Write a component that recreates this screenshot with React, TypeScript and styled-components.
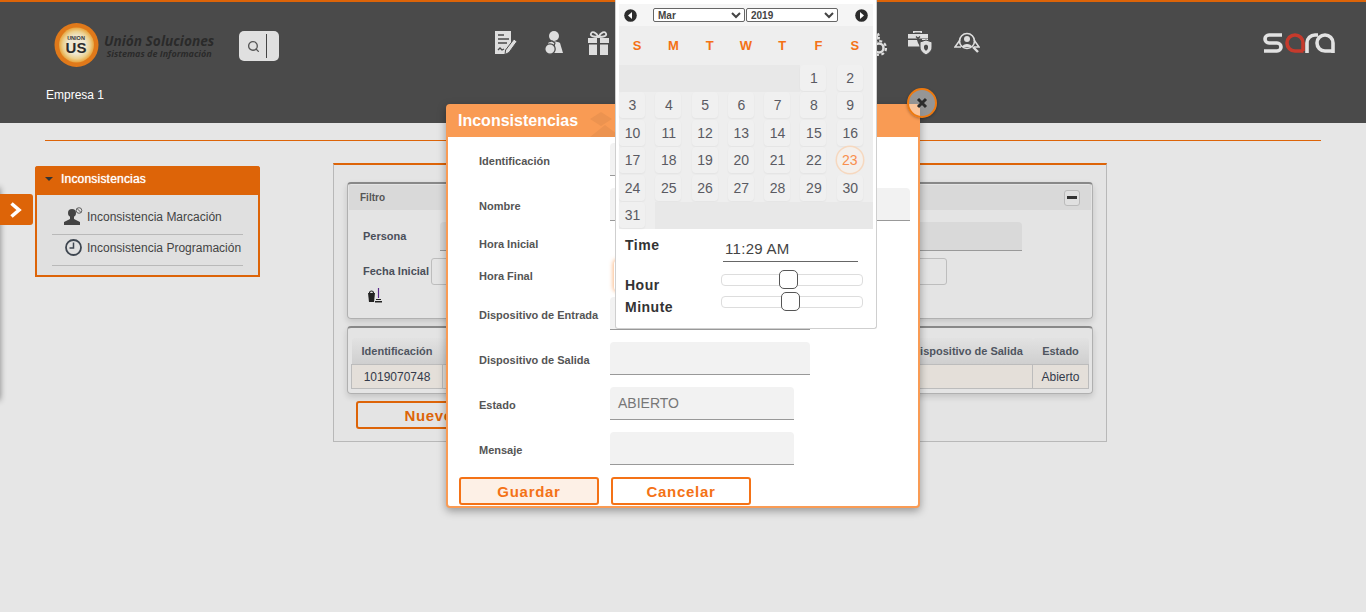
import React from "react";
import styled, { createGlobalStyle } from "styled-components";
import { Search } from "lucide-react";

const Global = createGlobalStyle`
  html, body { margin: 0; padding: 0; height: 100%; overflow: hidden; background: #e6e6e6; }
  body { font-family: "Liberation Sans", Arial, sans-serif; }
  #root { height: 612px; position: relative; overflow: hidden; }
`;

const orange = "#dd6408";

const Header = styled.header`
  height: 121px;
  border-top: 2px solid ${orange};
  background: #4a4a4a;
  display: flex;
  flex-direction: column;
`;
const TopRow = styled.div`
  display: flex;
  align-items: flex-start;
  height: 65px;
  padding: 21px 31px 0 54px;
`;
const Brand = styled.div`
  width: 185px;
  display: flex;
  gap: 5px;
  align-items: center;
  height: 44px;
`;
const BrandText = styled.div`
  display: flex;
  flex-direction: column;
  align-items: center;
  color: #2a2a2a;
  font-family: "Open Sans", sans-serif;
  font-style: italic;
  font-weight: 700;
  padding-top: 2px;
  white-space: nowrap;
`;
const BrandName = styled.span`
  font-size: 13.7px;
  line-height: 14px;
`;
const BrandSub = styled.span`
  font-size: 9px;
  line-height: 10px;
  margin-top: 1px;
`;
const SearchBox = styled.div`
  width: 40px;
  height: 30px;
  margin-top: 8px;
  border-radius: 5px;
  background: #e0e0e0;
  display: flex;
  align-items: center;
  padding-left: 8px;
  box-sizing: border-box;
  color: #555;
`;
const SearchBar = styled.span`
  width: 1px;
  height: 24px;
  background: #444;
  margin-left: 6px;
`;
const IconBar = styled.nav`
  margin-left: 204px;
  display: grid;
  grid-template-columns: repeat(9, 46.4px) 39px 55px;
  align-items: center;
  justify-items: center;
  height: 40px;
  color: #dedede;
`;
const Sora = styled.div`
  margin-left: auto;
  margin-top: 10px;
  width: 72px;
  height: 20px;
`;
const Empresa = styled.div`
  padding-left: 46px;
  color: #fff;
  font-size: 12px;
  line-height: 14px;
`;
const Rule = styled.hr`
  border: 0;
  height: 1px;
  background: ${orange};
  margin: 17px 45px 0;
`;
const Content = styled.main`
  display: flex;
  align-items: flex-start;
  padding: 22px 0 0 35px;
`;
const Sidebar = styled.aside`
  width: 225px;
  margin-top: 3px;
  box-sizing: border-box;
  border: 2px solid ${orange};
  border-top: 0;
  border-radius: 3px 3px 0 0;
  background: #e0e0e0;
`;
const SideHead = styled.div`
  height: 26px;
  padding: 0 0 3px 10px;
  margin: 0 -2px;
  background: ${orange};
  border-radius: 3px 3px 0 0;
  display: flex;
  align-items: center;
  gap: 8px;
  color: #fff;
  font-size: 12px;
  letter-spacing: 0.2px;
  text-shadow: 0 0 1px #fff;
`;
const Caret = styled.span`
  width: 0;
  height: 0;
  border-left: 4px solid transparent;
  border-right: 4px solid transparent;
  border-top: 4px solid #333;
`;
const SideList = styled.div`
  padding: 9px 15px 9px;
`;
const SideItem = styled.div`
  height: 25px;
  border-bottom: 1px solid #b9b9b9;
  display: flex;
  align-items: center;
  gap: 4px;
  padding: 0 0 5px 12px;
  font-size: 12px;
  color: #444;
  white-space: nowrap;
`;
const Panel = styled.section`
  width: 774px;
  height: 279px;
  margin-left: 73px;
  box-sizing: border-box;
  border: 1px solid #b8b8b8;
  border-top: 2px solid ${orange};
  background: #e4e4e4;
  padding: 17px 13px 0;
`;
const Card = styled.div<{ $h: number }>`
  height: ${(p) => p.$h}px;
  box-sizing: border-box;
  border: 1px solid #b0b0b0;
  border-top: 2px solid #888;
  border-radius: 4px;
  box-shadow: 0 3px 6px rgba(0, 0, 0, 0.14);
  margin-bottom: 7px;
  padding: 1px;
`;
const CardHead = styled.div`
  height: 25px;
  background: #d9d9d9;
  display: flex;
  align-items: center;
  justify-content: space-between;
  padding: 0 11px;
  font-size: 10px;
  font-weight: 700;
  color: #555;
`;
const Collapse = styled.span`
  width: 16px;
  height: 16px;
  box-sizing: border-box;
  border: 1px solid #bbb;
  border-radius: 3px;
  background: #e0e0e0;
  display: flex;
  align-items: center;
  justify-content: center;
  &::before {
    content: "";
    width: 10px;
    height: 3px;
    background: #333;
  }
`;
const FilterRow = styled.div<{ $t: number }>`
  display: flex;
  align-items: center;
  margin-top: ${(p) => p.$t}px;
  padding-left: 14px;
  font-size: 11px;
  font-weight: 700;
  color: #4a4f5a;
  white-space: nowrap;
`;
const FilterLabel = styled.span`
  padding-bottom: 2px;
`;
const PersonaInput = styled.div`
  width: 582px;
  height: 29px;
  box-sizing: border-box;
  margin-left: 34px;
  background: #d9d9d9;
  border-bottom: 1px solid #999;
  border-radius: 4px 4px 0 0;
`;
const DateInput = styled.div`
  width: 516px;
  height: 27px;
  box-sizing: border-box;
  margin-left: 2px;
  border: 1px solid #bdbdbd;
  border-radius: 3px;
`;
const Broom = styled.div`
  height: 16px;
  margin: 3px 0 0 18px;
`;
const Table = styled.table`
  width: 737px;
  table-layout: fixed;
  border-collapse: collapse;
  margin: 9px 0 0 2px;
`;
const Th = styled.th`
  height: 26px;
  padding: 0;
  font-size: 11px;
  font-weight: 700;
  color: #4f5560;
  background: linear-gradient(#e2e2e2, #cfcfcf);
  border-radius: 3px 3px 0 0;
  white-space: nowrap;
`;
const Td = styled.td`
  height: 23px;
  padding: 0;
  text-align: center;
  font-size: 12px;
  color: #333a4a;
  background: #e4dfd9;
  border: 1px solid #bcbcbc;
`;
const NewButton = styled.button`
  display: block;
  width: 146px;
  height: 28px;
  margin-left: 9px;
  border: 2px solid ${orange};
  border-radius: 3px;
  background: transparent;
  color: ${orange};
  font: 700 15px "Liberation Sans", Arial, sans-serif;
  letter-spacing: 0.6px;
`;
const SideTab = styled.div`
  position: absolute;
  left: 0;
  top: 194px;
  width: 33px;
  height: 31px;
  background: ${orange};
  border-radius: 0 3px 3px 0;
  display: flex;
  align-items: center;
  padding-left: 9px;
  box-sizing: border-box;
`;
const EdgeShade = styled.div`
  position: absolute;
  left: -8px;
  top: 188px;
  width: 8px;
  height: 212px;
  box-shadow: 0 0 6px rgba(0, 0, 0, 0.45);
`;
const Modal = styled.div`
  position: absolute;
  left: 446px;
  top: 104px;
  width: 474px;
  height: 404px;
  box-sizing: border-box;
  border: 2px solid #f99b54;
  border-radius: 4px;
  background: #fff;
  box-shadow: 0 3px 9px rgba(0, 0, 0, 0.35);
`;
const ModalHead = styled.div`
  height: 29px;
  padding: 0 0 2px 10px;
  background: #f99b54;
  display: flex;
  align-items: center;
  color: #fff;
  font-size: 16px;
  font-weight: 700;
  overflow: hidden;
`;
const Diamonds = styled.svg`
  margin: 0 0 -2px 11px;
  flex: none;
`;
const Form = styled.div`
  padding-top: 6px;
`;
const FormRow = styled.div<{ $h?: number; $mb?: number }>`
  display: flex;
  align-items: center;
  height: ${(p) => p.$h ?? 33}px;
  margin-bottom: ${(p) => p.$mb ?? 12}px;
  padding-left: 31px;
`;
const Label = styled.label`
  width: 131px;
  flex: none;
  padding-top: 2px;
  font-size: 11px;
  font-weight: 700;
  color: #555;
  white-space: nowrap;
`;
const Field = styled.div<{ $w: number }>`
  width: ${(p) => p.$w}px;
  height: 33px;
  box-sizing: border-box;
  background: #f2f2f2;
  border-bottom: 1px solid #999;
  border-radius: 4px 4px 0 0;
  padding: 0 8px;
  display: flex;
  align-items: center;
  font-size: 14px;
  color: #777;
`;
const FocusField = styled.div`
  width: 180px;
  height: 31px;
  margin-left: 4px;
  border-radius: 4px;
  box-shadow: 0 0 4px 1px rgba(249, 155, 84, 0.7);
`;
const Actions = styled.div`
  display: flex;
  gap: 12px;
  padding-left: 11px;
`;
const ModalButton = styled.button<{ $on?: boolean }>`
  width: 140px;
  height: 28px;
  border: 2px solid #f47216;
  border-radius: 3px;
  background: ${(p) => (p.$on ? "#fdf0e6" : "#fff")};
  color: #f47216;
  font: 700 15px "Liberation Sans", Arial, sans-serif;
  letter-spacing: 0.7px;
`;
const CloseBtn = styled.div`
  position: absolute;
  left: 907px;
  top: 88px;
  width: 30px;
  height: 30px;
  box-sizing: border-box;
  border: 2px solid #ee7a10;
  border-radius: 50%;
  background: rgba(255, 255, 255, 0.42);
  box-shadow: 0 1px 3px rgba(0, 0, 0, 0.3);
  display: flex;
  align-items: center;
  justify-content: center;
`;
const Calendar = styled.div`
  position: absolute;
  left: 615px;
  top: 0;
  width: 262px;
  height: 329px;
  box-sizing: border-box;
  background: #fff;
  border: 1px solid #cfcfcf;
  border-top: 0;
  border-radius: 0 0 3px 3px;
  padding: 4px 3px 0;
`;
const CalTitle = styled.div`
  height: 22px;
  background: #f5f5f5;
  display: flex;
  align-items: center;
  padding: 0 5px;
`;
const NavBtn = styled.svg`
  flex: none;
`;
const Selects = styled.div`
  display: flex;
  margin: -1px auto 0 16px;
  gap: 1px;
`;
const Select = styled.select`
  width: 92px;
  height: 14px;
  padding: 0;
  border: 1px solid #666;
  border-radius: 2px;
  background-color: #fff;
  font: 700 10px "Liberation Sans", Arial, sans-serif;
  color: #444;
`;
const Weekdays = styled.div`
  display: grid;
  grid-template-columns: repeat(7, 1fr);
  height: 39px;
  align-items: center;
  background: #eee;
  text-align: center;
  font-size: 13px;
  font-weight: 700;
  color: #f47216;
`;
const Days = styled.div`
  display: grid;
  grid-template-columns: repeat(7, 36.29px);
  grid-auto-rows: 27.4px;
  background: #eee;
  height: 164px;
`;
const Blank = styled.div<{ $span: number }>`
  grid-column: span ${(p) => p.$span};
  background: #e8e8e8;
`;
const Day = styled.div<{ $today?: boolean }>`
  width: 26px;
  height: 26px;
  padding-left: 1px;
  box-sizing: border-box;
  border-radius: 4px;
  background: #f0f0f0;
  box-shadow: 0 1px 2px rgba(0, 0, 0, 0.05);
  display: flex;
  align-items: center;
  justify-content: center;
  font-size: 14px;
  color: #5a5a62;
  ${(p) =>
    p.$today
      ? `padding-left: 0; border-radius: 50%; color: #f98f4e; box-shadow: 0 0 0 1.5px #f6d8bf; background: #f4f0ec;`
      : ""}
`;
const TimeGrid = styled.div`
  display: grid;
  grid-template-columns: 98px 142px;
  grid-template-rows: 33px 22px 22px;
  padding: 7px 0 0 6px;
  color: #333;
  font-size: 14px;
  font-weight: 700;
`;
const TimeLabel = styled.div<{ $row: number; $pad?: number }>`
  grid-row: ${(p) => p.$row};
  grid-column: 1;
  padding-top: ${(p) => p.$pad ?? 0}px;
  letter-spacing: 0.5px;
`;
const TimeValue = styled.div`
  grid-row: 1;
  grid-column: 2;
  width: 135px;
  height: 26px;
  box-sizing: border-box;
  border-bottom: 1px solid #666;
  padding: 4px 0 0 2px;
  font-size: 15px;
  font-weight: 400;
  letter-spacing: 0.3px;
  color: #444;
`;
const SliderCell = styled.div<{ $row: number }>`
  grid-row: ${(p) => p.$row};
  grid-column: 2;
  display: flex;
  align-items: center;
  margin-left: -2px;
`;
const Track = styled.div`
  position: relative;
  width: 142px;
  height: 12px;
  box-sizing: border-box;
  border: 1px solid #ddd;
  border-radius: 4px;
  background: #fff;
`;
const Handle = styled.div`
  position: absolute;
  top: -5px;
  width: 19px;
  height: 19px;
  box-sizing: border-box;
  border: 1px solid #555;
  border-radius: 5px;
  background: #fff;
`;

const Logo = () => (
  <svg width="45" height="44" viewBox="0 0 45 44">
    <defs>
      <radialGradient id="lg">
        <stop offset="50%" stopColor="#efe8d2" />
        <stop offset="78%" stopColor="#ecd08e" />
        <stop offset="100%" stopColor="#e8a53e" />
      </radialGradient>
    </defs>
    <circle cx="22.5" cy="22" r="22" fill="#e0791a" />
    <circle cx="22.5" cy="22" r="17.5" fill="url(#lg)" />
    <text x="22" y="17" textAnchor="middle" fontSize="5.5" fontWeight="700" fontFamily="Liberation Sans" fill="#333">
      UNION
    </text>
    <text x="22" y="30" textAnchor="middle" fontSize="15" fontWeight="700" fontFamily="Liberation Sans" fill="#2c2c2c">
      US
    </text>
  </svg>
);

const DocIcon = () => (
  <svg width="24" height="26" viewBox="0 0 24 26">
    <path d="M1 1h16v14l-5 9H1z" fill="currentColor" />
    <path d="M4 5h6M4 9h11M4 13h9M4 20l2-2 2 2 2-1" stroke="#4a4a4a" strokeWidth="1.3" fill="none" />
    <path d="M20 9l3 2.5-8 11-4 2 .6-4.5z" fill="currentColor" stroke="#4a4a4a" strokeWidth="1" />
  </svg>
);
const PersonIcon = () => (
  <svg width="20" height="26" viewBox="0 0 20 26">
    <circle cx="11" cy="6" r="5" fill="currentColor" />
    <path d="M5 13c3-2 9-2 12 0l3 10H9z" fill="currentColor" />
    <circle cx="7" cy="19" r="5.2" fill="currentColor" stroke="#4a4a4a" strokeWidth="1.3" />
    <path d="M9 11l3 2-1 3" stroke="#4a4a4a" strokeWidth="1.2" fill="none" />
  </svg>
);
const GiftIcon = () => (
  <svg width="23" height="25" viewBox="0 0 23 25">
    <path d="M1 7h9v5H1zM13 7h9v5h-9zM2 13.5h8V24H2zM13 13.5h8V24h-8z" fill="currentColor" />
    <path d="M11.5 6C9 1 5 0 4 2.5S6 6 11.5 6zM11.5 6c2.5-5 6.5-6 7.5-3.500S17 6 11.5 6z" fill="none" stroke="currentColor" strokeWidth="1.8" />
  </svg>
);
const GearIcon = () => (
  <svg width="22" height="26" viewBox="0 0 22 26">
    <circle cx="7" cy="7" r="4" fill="none" stroke="currentColor" strokeWidth="2.5" />
    <circle cx="7" cy="7" r="6" fill="none" stroke="currentColor" strokeWidth="2" strokeDasharray="2.5 2.2" />
    <circle cx="13" cy="18" r="4.5" fill="none" stroke="currentColor" strokeWidth="2.5" />
    <circle cx="13" cy="18" r="7" fill="none" stroke="currentColor" strokeWidth="2.2" strokeDasharray="3 2.5" />
  </svg>
);
const CaseIcon = () => (
  <svg width="26" height="26" viewBox="0 0 26 26">
    <path d="M6 3V1h9v2h-1.5V2.5h-6V3z" fill="currentColor" />
    <path d="M1 4h20v4.5H1zM1 10h9l1 3 2 3.5H1zM15 9h6v1h-6z" fill="currentColor" />
    <path d="M9 6.5l2 2 2-2" stroke="#4a4a4a" strokeWidth="1.3" fill="none" />
    <path d="M19 10l6 2v5c0 4-3 6-6 8-3-2-6-4-6-8v-5z" fill="currentColor" stroke="#4a4a4a" strokeWidth="1" />
    <path d="M19 14.5l2 1.2v2c0 1.4-1 2.3-2 3-1-.7-2-1.6-2-3v-2z" fill="#4a4a4a" />
  </svg>
);
const AuditIcon = () => (
  <svg width="26" height="22" viewBox="0 0 26 22">
    <circle cx="13" cy="9" r="7.5" fill="none" stroke="currentColor" strokeWidth="1.6" />
    <circle cx="13" cy="7" r="3" fill="currentColor" />
    <path d="M8 15c1-4 9-4 10 0" fill="currentColor" />
    <path d="M6 8L1 15h6M20 8l5 7h-5" fill="none" stroke="currentColor" strokeWidth="1.5" />
    <path d="M19 15l5 5" stroke="currentColor" strokeWidth="2.4" />
  </svg>
);
const SoraLogo = () => (
  <svg width="72" height="20" viewBox="0 0 72 20">
    <path d="M19 2H6a4 4 0 0 0 0 8h8a4 4 0 0 1 0 8H1" fill="none" stroke="#e2e2e2" strokeWidth="3.6" />
    <path d="M40.5 18H32a8 8 0 1 1 8-8v8" fill="none" stroke="#c63a2c" strokeWidth="3.6" />
    <path d="M44 20V10a8 8 0 0 1 8-8h3" fill="none" stroke="#e2e2e2" strokeWidth="3.6" />
    <path d="M70 18h-8a8 8 0 1 1 8-8v10" fill="none" stroke="#e2e2e2" strokeWidth="3.6" />
  </svg>
);
const UserBlock = () => (
  <svg width="19" height="19" viewBox="0 0 19 19">
    <circle cx="8" cy="6" r="4" fill="#444" />
    <path d="M6 9h4v3l6 3v3H0v-3l6-3z" fill="#444" />
    <circle cx="15" cy="3.5" r="2.8" fill="none" stroke="#444" strokeWidth="0.8" />
    <path d="M13 1.5l4 4" stroke="#444" strokeWidth="0.8" />
  </svg>
);
const ClockIcon = () => (
  <svg width="19" height="19" viewBox="0 0 19 19">
    <circle cx="9.5" cy="9.5" r="7.5" fill="none" stroke="#3e4650" strokeWidth="1.8" />
    <path d="M9.5 4.5v5.5H5.5" fill="none" stroke="#3e4650" strokeWidth="1.5" />
  </svg>
);
const BroomIcon = () => (
  <svg width="16" height="15" viewBox="0 0 16 15">
    <path d="M1 5h7l-1 9H2z" fill="#222" />
    <path d="M2.5 5a2 2 0 0 1 4 0" fill="none" stroke="#222" strokeWidth="1.2" />
    <path d="M11.5 0v10" stroke="#5a2a8a" strokeWidth="1.2" />
    <path d="M9 11h5v1H9zM8 13h7v1.5H8z" fill="#222" />
  </svg>
);

const Prev = ({ flip }: { flip?: boolean }) => (
  <NavBtn width="13" height="13" viewBox="0 0 13 13" style={flip ? { transform: "scaleX(-1)" } : undefined}>
    <circle cx="6.5" cy="6.5" r="6.3" fill="#2c2c2c" />
    <path d="M8 3L4 6.5 8 10z" fill="#fff" />
  </NavBtn>
);

const weekdays = ["S", "M", "T", "W", "T", "F", "S"];
const days = Array.from({ length: 31 }, (_, i) => i + 1);
const heads = ["Identificación", "", "", "", "", "Dispositivo de Salida", "Estado"];
const colWidths = [91, 126, 110, 110, 114, 130, 56];

export default function App() {
  return (
    <>
      <Global />
      <Header>
        <TopRow>
          <Brand>
            <Logo />
            <BrandText>
              <BrandName>Unión Soluciones</BrandName>
              <BrandSub>Sistemas de Información</BrandSub>
            </BrandText>
          </Brand>
          <SearchBox>
            <Search size={13} strokeWidth={2.5} />
            <SearchBar />
          </SearchBox>
          <IconBar>
            <DocIcon />
            <PersonIcon />
            <GiftIcon />
            <DocIcon />
            <PersonIcon />
            <DocIcon />
            <PersonIcon />
            <DocIcon />
            <GearIcon />
            <CaseIcon />
            <AuditIcon />
          </IconBar>
          <Sora>
            <SoraLogo />
          </Sora>
        </TopRow>
        <Empresa>Empresa 1</Empresa>
      </Header>
      <Rule />
      <Content>
        <Sidebar>
          <SideHead>
            <Caret />
            Inconsistencias
          </SideHead>
          <SideList>
            <SideItem>
              <UserBlock />
              Inconsistencia Marcación
            </SideItem>
            <SideItem>
              <ClockIcon />
              Inconsistencia Programación
            </SideItem>
          </SideList>
        </Sidebar>
        <Panel>
          <Card $h={137}>
            <CardHead>
              Filtro
              <Collapse />
            </CardHead>
            <FilterRow $t={12}>
              <FilterLabel>Persona</FilterLabel>
              <PersonaInput />
            </FilterRow>
            <FilterRow $t={7}>
              <FilterLabel>Fecha Inicial</FilterLabel>
              <DateInput />
            </FilterRow>
            <Broom>
              <BroomIcon />
            </Broom>
          </Card>
          <Card $h={68}>
            <Table>
              <colgroup>
                {colWidths.map((w, i) => (
                  <col key={i} style={{ width: w }} />
                ))}
              </colgroup>
              <thead>
                <tr>
                  {heads.map((h, i) => (
                    <Th key={i}>{h}</Th>
                  ))}
                </tr>
              </thead>
              <tbody>
                <tr>
                  <Td>1019070748</Td>
                  <Td />
                  <Td />
                  <Td />
                  <Td />
                  <Td />
                  <Td>Abierto</Td>
                </tr>
              </tbody>
            </Table>
          </Card>
          <NewButton>Nuevo</NewButton>
        </Panel>
      </Content>

      <EdgeShade />
      <SideTab>
        <svg width="14" height="16" viewBox="0 0 14 16">
          <path d="M2.5 1.5L10 8l-7.5 6.5" fill="none" stroke="#fff" strokeWidth="3.6" />
        </svg>
      </SideTab>

      <Modal>
        <ModalHead>
          Inconsistencias
          <Diamonds width="34" height="31" viewBox="0 0 34 31">
            <path d="M1 13l11-7 11 7-11 7zM1 31l15-12 16 12z" fill="#ec9350" />
          </Diamonds>
        </ModalHead>
        <Form>
          <FormRow>
            <Label>Identificación</Label>
            <Field $w={200} />
          </FormRow>
          <FormRow $mb={6}>
            <Label>Nombre</Label>
            <Field $w={300} />
          </FormRow>
          <FormRow $h={32} $mb={0}>
            <Label>Hora Inicial</Label>
          </FormRow>
          <FormRow $h={32} $mb={6}>
            <Label>Hora Final</Label>
            <FocusField />
          </FormRow>
          <FormRow>
            <Label>Dispositivo de Entrada</Label>
            <Field $w={200} />
          </FormRow>
          <FormRow>
            <Label>Dispositivo de Salida</Label>
            <Field $w={200} />
          </FormRow>
          <FormRow>
            <Label>Estado</Label>
            <Field $w={184}>ABIERTO</Field>
          </FormRow>
          <FormRow>
            <Label>Mensaje</Label>
            <Field $w={184} />
          </FormRow>
          <Actions>
            <ModalButton $on>Guardar</ModalButton>
            <ModalButton>Cancelar</ModalButton>
          </Actions>
        </Form>
      </Modal>
      <CloseBtn>
        <svg width="12" height="12" viewBox="0 0 12 12">
          <path d="M2 2l8 8M10 2l-8 8" stroke="#2c2c2c" strokeWidth="3" />
        </svg>
      </CloseBtn>

      <Calendar>
        <CalTitle>
          <Prev />
          <Selects>
            <Select defaultValue="Mar">
              <option>Mar</option>
            </Select>
            <Select defaultValue="2019">
              <option>2019</option>
            </Select>
          </Selects>
          <Prev flip />
        </CalTitle>
        <Weekdays>
          {weekdays.map((d, i) => (
            <span key={i}>{d}</span>
          ))}
        </Weekdays>
        <Days>
          <Blank $span={5} />
          {days.map((d) => (
            <Day key={d} $today={d === 23}>
              {d}
            </Day>
          ))}
          <Blank $span={6} />
        </Days>
        <TimeGrid>
          <TimeLabel $row={1} $pad={1}>
            Time
          </TimeLabel>
          <TimeValue>11:29 AM</TimeValue>
          <TimeLabel $row={2} $pad={8}>
            Hour
          </TimeLabel>
          <SliderCell $row={2}>
            <Track>
              <Handle style={{ left: 57 }} />
            </Track>
          </SliderCell>
          <TimeLabel $row={3} $pad={8}>
            Minute
          </TimeLabel>
          <SliderCell $row={3}>
            <Track>
              <Handle style={{ left: 59 }} />
            </Track>
          </SliderCell>
        </TimeGrid>
      </Calendar>
    </>
  );
}
